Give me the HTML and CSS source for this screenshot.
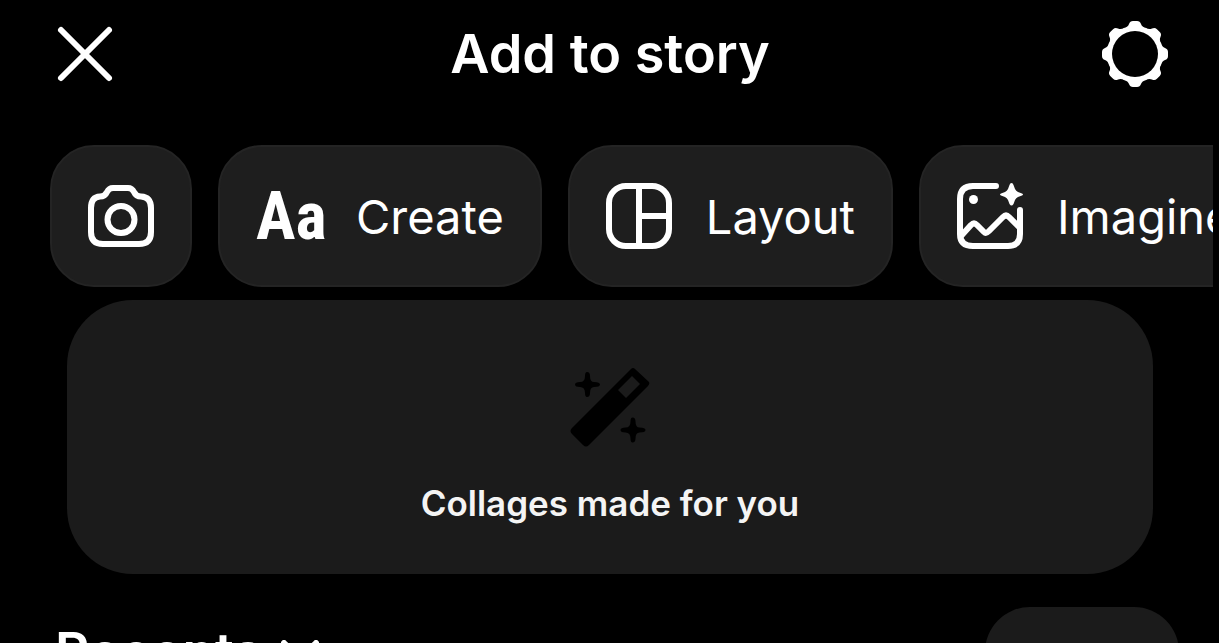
FILE: index.html
```
<!DOCTYPE html>
<html lang="en">
<head>
<meta charset="utf-8">
<meta name="viewport" content="width=device-width, initial-scale=1">
<title>Add to story</title>
<link rel="stylesheet" href="styles.css">
</head>
<body>
<header class="topbar">
  <button class="icon-button" type="button" aria-label="Close">
    <svg class="icon" viewBox="0 0 66 66" fill="none" stroke="#fff" stroke-width="6" stroke-linecap="round"><path d="M9 9 57 57M57 9 9 57"/></svg>
  </button>
  <h1 class="title">Add to story</h1>
  <button class="icon-button" type="button" aria-label="Settings">
    <svg class="icon" viewBox="0 0 66 66"><g fill="#fff"><circle cx="33" cy="33" r="28"/>
      <g id="teeth"><path id="tooth" d="M22 7Q26 6 27 3Q28 0 31 0H35Q38 0 39 3Q40 6 44 7L42 12H24Z"/><use href="#tooth" transform="rotate(45 33 33)"/><use href="#tooth" transform="rotate(90 33 33)"/><use href="#tooth" transform="rotate(135 33 33)"/></g>
      <use href="#teeth" transform="rotate(180 33 33)"/></g><circle cx="33" cy="33" r="23" fill="#000"/></svg>
  </button>
</header>
<main>
  <nav class="chips" aria-label="Story tools">
    <button class="chip" type="button" aria-label="Camera">
      <svg class="icon" viewBox="0 0 66 66" fill="none" stroke="#fff" stroke-width="6"><path d="M12 13.500Q17 13.500 19 9Q21 5 25 5H40Q44 5 46 9Q48 13.500 53 13.500Q63 14 63 25V49Q63 61 51 61H15Q3 61 3 49V25Q3 14 12 13.500Z"/><circle cx="33" cy="36.500" r="13.500"/></svg>
    </button>
    <button class="chip" type="button"><span class="letters" aria-hidden="true">Aa</span><span>Create</span></button>
    <button class="chip" type="button">
      <svg class="icon" viewBox="0 0 66 66" fill="none" stroke="#fff" stroke-width="6"><rect x="3" y="3" width="60" height="60" rx="17"/><path d="M33 3V63M33 33H63"/></svg>
      <span>Layout</span>
    </button>
    <button class="chip" type="button">
      <svg class="icon" viewBox="0 0 66 66" fill="none" stroke="#fff" stroke-width="6" stroke-linecap="round" stroke-linejoin="round"><path d="M39 3H16Q3 3 3 16V51Q3 63 16 63H51Q63 63 63 51V27"/><path d="M4 53 14 42Q17 39 20 42L27 49Q29 51 32 48L46 34Q49 31 52 34L62 44"/><circle cx="16.500" cy="16.500" r="4.500" fill="#fff" stroke="none"/><path d="M54.500 0Q56 0 56.500 2L58 6Q59 8 61 9L65 10.500Q67 11.500 65 12.500L61 14Q59 15 58 17L56.500 21Q54.500 24 52.500 21L51 17Q50 15 48 14L44 12.500Q42 11.500 44 10.500L48 9Q50 8 51 6L52.500 2Q53 0 54.500 0Z" fill="#fff" stroke="none"/></svg>
      <span>Imagine</span>
    </button>
  </nav>
  <button class="collages" type="button">
    <svg class="wand" viewBox="0 0 80 80"><path d="M2 60 61 1Q63 -1 65 1L79 14Q80 16 78 18L19 77Q16 80 13 77L2 66Q-1 63 2 60ZM48 22 56 30 70 16 62 8Z" fill="#000" fill-rule="evenodd"/><g id="spark"><path d="M17 4Q20 4 20 8Q20 14 24 14Q30 14 30 16.500Q30 19 24 19Q20 19 20 25Q20 29 17 29Q15 29 15 25Q15 19 10 19Q5 19 5 16.500Q5 14 10 14Q15 14 15 8Q15 4 17 4Z"/></g><use href="#spark" transform="translate(45.500 45.500)"/></svg>
    <span>Collages made for you</span>
  </button>
  <div class="gallery-bar">
    <button class="album" type="button">Recents
      <svg class="chevron" viewBox="0 0 38 24" fill="none" stroke="#fff" stroke-width="6" stroke-linecap="round" stroke-linejoin="round"><path d="M3 3 19 19 35 3"/></svg>
    </button>
    <button class="select" type="button" aria-label="Select multiple"></button>
  </div>
</main>
</body>
</html>
```
FILE: styles.css
```
* { box-sizing: border-box; }
body {
  margin: 0;
  height: 100vh;
  overflow: hidden;
  background: #000;
  color: #fff;
  font-family: Inter, "Liberation Sans", sans-serif;
}
button {
  padding: 0;
  border: 0;
  background: none;
  color: inherit;
  font: inherit;
  cursor: pointer;
}
.topbar {
  display: flex;
  align-items: center;
  justify-content: space-between;
  padding: 20px 51px 0 52px;
}
.icon-button { display: flex; }
.icon { display: block; width: 66px; height: 66px; flex: none; }
.title {
  margin: 0;
  font-size: 54px;
  line-height: 68px;
  font-weight: 600;
}
.chips {
  display: flex;
  gap: 26px;
  margin: 57px 6px 0 0;
  padding-left: 50px;
  overflow: hidden;
}
.chip {
  display: flex;
  flex: none;
  align-items: center;
  gap: 34px;
  height: 142px;
  padding: 2px 36px 0;
  border: 2px solid #242424;
  border-radius: 44px;
  background: #1e1e1e;
  font-size: 47px;
  line-height: 60px;
}
.chip .icon { margin-bottom: 2px; }
.letters {
  width: 66px;
  font-family: "Roboto Condensed", Roboto, "Liberation Sans", sans-serif;
  font-size: 66px;
  font-weight: 700;
}
.collages {
  display: flex;
  flex-direction: column;
  align-items: center;
  gap: 32px;
  width: calc(100% - 133px);
  margin: 13px 66px 0 67px;
  padding: 68px 0 47px;
  border-radius: 66px;
  background: #1b1b1b;
  color: #f4f4f4;
  font-size: 35px;
  line-height: 47px;
  font-weight: 600;
}
.wand { display: block; width: 80px; height: 80px; }
.gallery-bar {
  display: flex;
  align-items: center;
  justify-content: space-between;
  margin-top: 33px;
  padding: 0 40px 0 55px;
}
.album {
  display: flex;
  align-items: center;
  gap: 19px;
  font-size: 53px;
  line-height: 64px;
  font-weight: 600;
}
.chevron { display: block; width: 38px; height: 24px; }
.select {
  width: 194px;
  height: 90px;
  border-radius: 45px;
  background: #1b1b1b;
}
```
